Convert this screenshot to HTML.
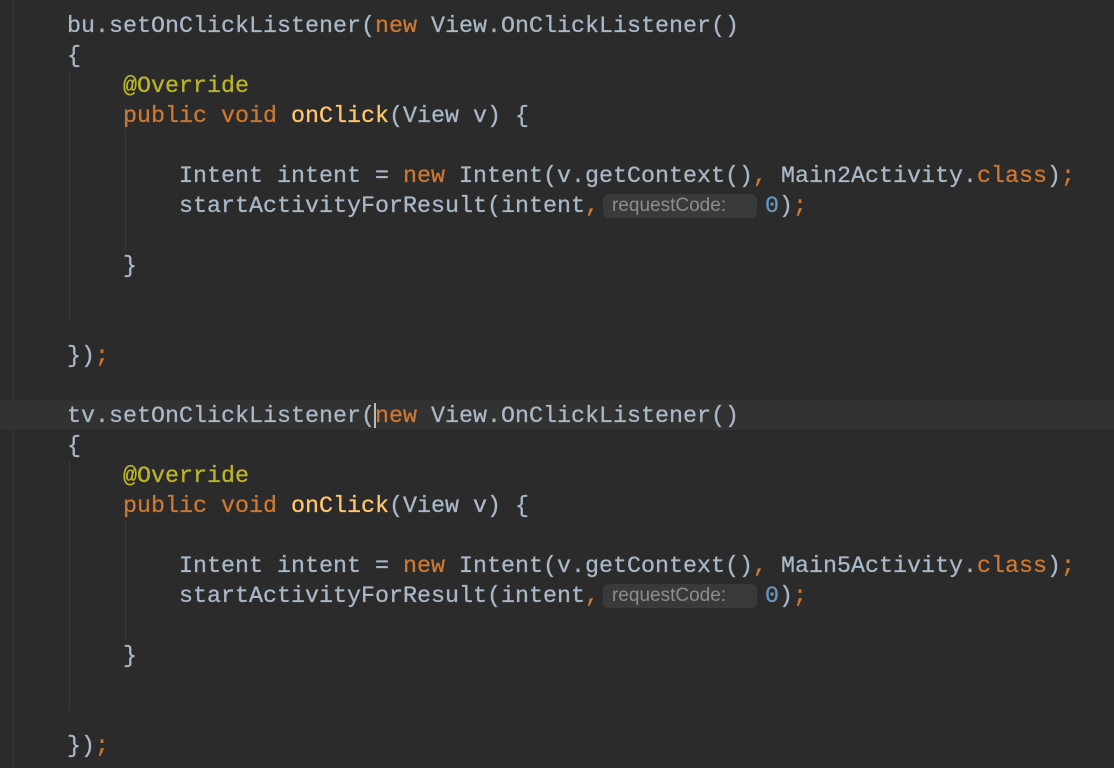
<!DOCTYPE html>
<html><head><meta charset="utf-8"><style>
html,body{margin:0;padding:0;background:#2b2b2b;width:1114px;height:768px;overflow:hidden}
.l{position:absolute;left:67px;height:30px;line-height:30px;font-family:"Liberation Mono",monospace;font-size:23.33px;color:#a9b7c6;white-space:pre;margin-top:2px;-webkit-text-stroke:0.3px}
.k{color:#cc7832}.a{color:#bbb529}.m{color:#ffc66d}.n{color:#6897bb}
.h{display:inline-block;font-family:"Liberation Sans",sans-serif;font-size:19px;color:#8c8c8c;background:#3a3a3a;border-radius:6px;line-height:24px;height:24px;width:145px;padding-left:9px;text-align:left;margin:0 8px 0 4px;vertical-align:1px;-webkit-text-stroke:0}
.g{position:absolute;width:1px;background:#3a3a3a}
</style></head><body>
<div style="position:absolute;left:0;top:400px;width:1114px;height:30px;background:#323232"></div>
<div class="g" style="left:13px;top:0;height:768px;background:#353535"></div>
<div class="g" style="left:69px;top:70px;height:250px"></div>
<div class="g" style="left:125px;top:130px;height:120px"></div>
<div class="g" style="left:69px;top:460px;height:250px"></div>
<div class="g" style="left:125px;top:520px;height:120px"></div>
<div class="l" style="top:10px">bu.setOnClickListener(<span class="k">new</span> View.OnClickListener()</div>
<div class="l" style="top:40px">{</div>
<div class="l" style="top:70px">    <span class="a">@Override</span></div>
<div class="l" style="top:100px">    <span class="k">public void</span> <span class="m">onClick</span>(View v) {</div>
<div class="l" style="top:160px">        Intent intent = <span class="k">new</span> Intent(v.getContext()<span class="k">,</span> Main2Activity.<span class="k">class</span>)<span class="k">;</span></div>
<div class="l" style="top:190px">        startActivityForResult(intent<span class="k">,</span><span class="h">requestCode:</span><span class="n">0</span>)<span class="k">;</span></div>
<div class="l" style="top:250px">    }</div>
<div class="l" style="top:340px">})<span class="k">;</span></div>
<div class="l" style="top:400px">tv.setOnClickListener(<span class="k">new</span> View.OnClickListener()</div>
<div style="position:absolute;left:374px;top:403px;width:2px;height:25px;background:#bbbbbb"></div>
<div class="l" style="top:430px">{</div>
<div class="l" style="top:460px">    <span class="a">@Override</span></div>
<div class="l" style="top:490px">    <span class="k">public void</span> <span class="m">onClick</span>(View v) {</div>
<div class="l" style="top:550px">        Intent intent = <span class="k">new</span> Intent(v.getContext()<span class="k">,</span> Main5Activity.<span class="k">class</span>)<span class="k">;</span></div>
<div class="l" style="top:580px">        startActivityForResult(intent<span class="k">,</span><span class="h">requestCode:</span><span class="n">0</span>)<span class="k">;</span></div>
<div class="l" style="top:640px">    }</div>
<div class="l" style="top:730px">})<span class="k">;</span></div>
</body></html>
